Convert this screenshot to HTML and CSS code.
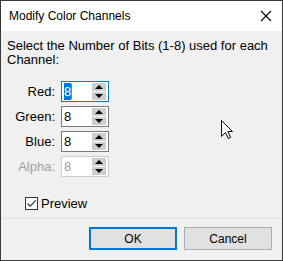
FILE: index.html
```html
<!DOCTYPE html>
<html lang="en">
<head>
    <meta charset="UTF-8">
    <title>Modify Color Channels</title>
    <link rel="stylesheet" href="styles.css">
</head>
<body>
    <div class="window">
        <div class="titlebar">
            <span class="title">Modify Color Channels</span>
            <svg class="close" width="12" height="12" viewBox="0 0 12 12">
                <path d="M1 1 L11 11 M11 1 L1 11" stroke="#000" stroke-width="1.1" fill="none"/>
            </svg>
        </div>
        <div class="content">
            <p class="intro">Select the Number of Bits (1-8) used for each Channel:</p>
            <div class="channels">
                <label class="lbl">Red:</label>
                <div class="spin focused"><span class="val"><span class="sel">8</span><span class="caret"></span></span><span class="arrows"><span class="up"></span><span class="down"></span></span></div>
                <label class="lbl">Green:</label>
                <div class="spin"><span class="val">8</span><span class="arrows"><span class="up"></span><span class="down"></span></span></div>
                <label class="lbl">Blue:</label>
                <div class="spin"><span class="val">8</span><span class="arrows"><span class="up"></span><span class="down"></span></span></div>
                <label class="lbl disabled">Alpha:</label>
                <div class="spin disabled"><span class="val">8</span><span class="arrows"><span class="up"></span><span class="down"></span></span></div>
            </div>
            <div class="preview">
                <span class="check">
                    <svg width="11" height="11" viewBox="0 0 11 11"><path d="M1.5 5.5 L4.2 8.2 L9.8 2.4" stroke="#333" stroke-width="1.2" fill="none"/></svg>
                </span>
                <span>Preview</span>
            </div>
            <svg class="cursor" width="13" height="20" viewBox="0 0 13 20">
                <path d="M0.5 0.5 L0.5 16.5 L4.5 12.5 L7.3 18.5 L9.6 17.5 L6.9 11.5 L11.5 11.5 Z" fill="#fff" stroke="#000" stroke-width="1"/>
            </svg>
        </div>
        <div class="footer">
            <button class="btn default">OK</button>
            <button class="btn">Cancel</button>
        </div>
    </div>
</body>
</html>
```
FILE: styles.css
```css
body { margin: 0; background: #2b2b2b; font-family: "Liberation Sans", Arial, sans-serif; font-size: 13px; color: #000; }
.window { width: 283px; height: 261px; box-sizing: border-box; border: 1px solid #3a3a3a; display: flex; flex-direction: column; background: #f0f0f0; }
.titlebar { height: 30px; background: #fff; display: flex; align-items: center; justify-content: space-between; padding: 0 10px 0 8px; }
.title { font-size: 12px; }
.content { flex: 1; position: relative; padding: 8px 6px 0 6px; }
.intro { margin: 0; line-height: 14px; }
.channels { display: grid; grid-template-columns: 48px 48px; column-gap: 6px; row-gap: 4px; margin-top: 14px; align-items: center; }
.lbl { text-align: right; }
.lbl.disabled { color: #a0a0a0; }
.spin { height: 21px; box-sizing: border-box; border: 1px solid #7a7a7a; background: #fff; display: flex; align-items: center; justify-content: space-between; padding: 0 2px 0 2px; }
.spin.focused { border-color: #0078d7; }
.spin.disabled { border-color: #cccccc; color: #a0a0a0; }
.val { display: flex; align-items: center; font-size: 13px; }
.sel { background: #0078d7; color: #fff; padding: 1px 0; }
.caret { width: 1px; height: 15px; background: #d07000; }
.arrows { display: flex; flex-direction: column; gap: 1px; }
.up, .down { width: 14px; height: 8px; background: #cdcdcd; display: flex; align-items: center; justify-content: center; }
.up::after { content: ""; border-left: 4px solid transparent; border-right: 4px solid transparent; border-bottom: 4px solid #000; }
.down::after { content: ""; border-left: 4px solid transparent; border-right: 4px solid transparent; border-top: 4px solid #000; }
.preview { display: flex; align-items: center; gap: 3px; margin: 19px 0 0 18px; }
.check { width: 13px; height: 13px; box-sizing: border-box; border: 1px solid #333; background: #fff; display: flex; align-items: center; justify-content: center; }
.cursor { position: absolute; left: 220px; top: 89px; }
.footer { border-top: 1px solid #dfdfdf; display: flex; justify-content: flex-end; gap: 7px; padding: 8px 10px 10px; }
.btn { width: 88px; height: 23px; background: #e1e1e1; border: 1px solid #adadad; font-family: inherit; font-size: 12px; padding: 0; }
.btn.default { border: 2px solid #0078d7; }
```
